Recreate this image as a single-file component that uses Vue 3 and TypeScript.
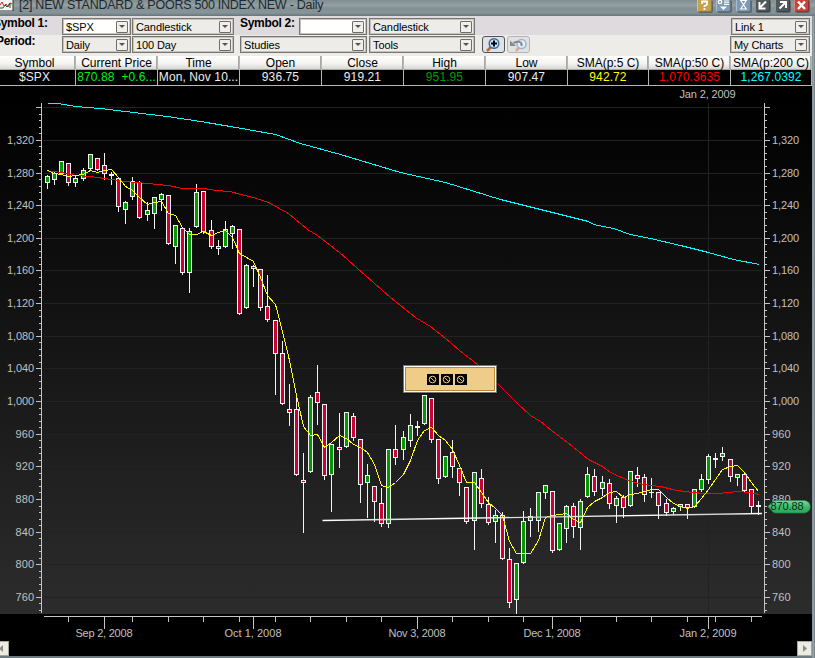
<script setup lang="ts">
type Kind = 'g' | 'r' | 'd'
type Candle = [x: number, high: number, top: number, bottom: number, low: number, kind: Kind]

const candles: Candle[] = [
  [47, 175, 176, 183, 189, 'g'], [54, 172, 173, 180, 185, 'g'], [61, 161, 161, 174, 175, 'g'], [68, 163, 163, 183, 186, 'r'],
  [75, 176, 178, 183, 187, 'g'], [83, 168, 170, 179, 181, 'g'], [90, 154, 154, 169, 170, 'g'], [97, 158, 158, 170, 171, 'r'],
  [104, 153, 165, 174, 180, 'r'], [111, 172, 174, 176, 185, 'd'], [118, 177, 178, 207, 212, 'r'], [125, 201, 202, 210, 224, 'g'],
  [132, 177, 181, 197, 200, 'g'], [139, 181, 182, 218, 219, 'r'], [147, 202, 210, 215, 221, 'g'], [154, 197, 197, 214, 229, 'g'],
  [161, 193, 194, 200, 211, 'g'], [168, 195, 195, 244, 245, 'r'], [175, 225, 225, 247, 264, 'g'], [182, 227, 228, 273, 275, 'r'],
  [189, 228, 231, 273, 293, 'g'], [196, 184, 192, 227, 228, 'g'], [203, 191, 191, 232, 234, 'r'], [211, 220, 230, 247, 249, 'r'],
  [218, 240, 246, 249, 255, 'r'], [225, 221, 229, 247, 248, 'g'], [232, 225, 226, 234, 249, 'g'], [239, 229, 229, 314, 315, 'r'],
  [246, 264, 265, 308, 309, 'g'], [253, 265, 266, 269, 287, 'r'], [260, 269, 269, 308, 311, 'r'], [267, 275, 306, 320, 322, 'r'],
  [275, 320, 320, 354, 395, 'r'], [282, 341, 353, 404, 405, 'r'], [289, 384, 409, 413, 426, 'r'], [296, 397, 409, 475, 476, 'r'],
  [303, 453, 480, 483, 533, 'r'], [310, 395, 397, 472, 473, 'g'], [317, 365, 392, 403, 425, 'r'], [324, 404, 404, 476, 480, 'r'],
  [331, 444, 444, 475, 512, 'g'], [339, 413, 447, 450, 468, 'r'], [346, 412, 412, 447, 448, 'g'], [353, 413, 416, 438, 441, 'r'],
  [360, 439, 439, 485, 503, 'r'], [367, 464, 475, 483, 518, 'g'], [374, 486, 486, 502, 522, 'r'], [381, 488, 503, 524, 527, 'r'],
  [388, 449, 449, 524, 528, 'g'], [395, 425, 449, 458, 465, 'r'], [403, 431, 437, 450, 460, 'g'], [410, 414, 425, 441, 447, 'g'],
  [417, 421, 426, 428, 436, 'd'], [424, 395, 395, 424, 425, 'g'], [431, 398, 398, 440, 443, 'r'], [438, 439, 439, 479, 484, 'r'],
  [445, 456, 456, 477, 478, 'g'], [452, 440, 452, 467, 478, 'r'], [459, 468, 468, 483, 496, 'r'], [466, 487, 487, 522, 524, 'r'],
  [474, 472, 472, 521, 550, 'g'], [481, 469, 478, 504, 508, 'r'], [488, 497, 504, 523, 525, 'r'], [495, 510, 515, 522, 543, 'g'],
  [502, 512, 515, 559, 560, 'r'], [509, 548, 559, 603, 608, 'r'], [516, 563, 563, 600, 614, 'g'], [523, 511, 521, 563, 564, 'g'],
  [530, 508, 516, 521, 537, 'g'], [538, 492, 492, 521, 532, 'g'], [545, 485, 485, 493, 499, 'g'], [552, 491, 491, 551, 553, 'r'],
  [559, 523, 523, 550, 551, 'g'], [566, 505, 506, 529, 543, 'g'], [573, 503, 506, 527, 538, 'r'], [580, 499, 501, 528, 550, 'g'],
  [587, 467, 474, 497, 498, 'g'], [594, 469, 476, 492, 496, 'r'], [602, 476, 482, 489, 496, 'g'], [609, 479, 483, 504, 509, 'r'],
  [616, 496, 498, 506, 523, 'g'], [623, 495, 497, 508, 518, 'r'], [630, 471, 471, 506, 507, 'g'], [637, 467, 475, 479, 487, 'r'],
  [644, 474, 477, 495, 502, 'r'], [651, 478, 492, 493, 498, 'd'], [658, 492, 492, 506, 519, 'r'], [666, 499, 503, 513, 516, 'r'],
  [673, 507, 508, 512, 515, 'g'], [680, 504, 504, 507, 511, 'g'], [687, 504, 504, 508, 519, 'r'], [694, 489, 489, 507, 508, 'g'],
  [701, 474, 479, 490, 492, 'g'], [708, 454, 456, 480, 484, 'g'], [715, 453, 458, 460, 468, 'd'], [722, 447, 453, 457, 461, 'g'],
  [730, 459, 459, 477, 482, 'r'], [737, 474, 474, 478, 486, 'g'], [744, 472, 474, 491, 492, 'r'], [751, 489, 489, 507, 514, 'r'],
  [758, 501, 505, 507, 515, 'd'],
]

const fastY = [
  170, 173, 174, 176, 175, 174, 170, 172, 170, 169, 177, 186, 190, 197, 204, 202, 201, 213, 215, 227, 234, 234, 231, 235, 232,
  230, 237, 253, 257, 261, 277, 295, 304, 331, 360, 395, 426, 435, 434, 447, 442, 435, 438, 444, 447, 452, 464, 485, 487, 482,
  474, 460, 440, 430, 427, 435, 440, 449, 465, 482, 482, 492, 502, 508, 515, 541, 553, 553, 553, 540, 517, 515, 514, 513, 519,
  522, 507, 501, 497, 492, 491, 497, 494, 493, 491, 489, 489, 497, 503, 506, 508, 506, 498, 489, 479, 469, 466, 465, 472, 482, 491,
]
const fast = candles.map((c, i) => `${c[0]},${fastY[i]}`).join(' ')
const mid =
  '47,171 54,171 61,172 75,175 90,176 104,178 125,181 147,183 168,185 182,188 203,188 215,190 230,191 240,194 253,197 268,202 288,213 307,229 317,235 339,252 365,275 390,297 415,317 430,326 450,342 459,350 477,364 497,383 517,403 530,415 540,421 551,430 567,442 588,459 602,466 610,472 630,481 643,484 660,486 672,489 683,491 703,493 718,493 738,491 748,492 759,494'
const slow =
  '47,103 57,103 75,106 100,108 125,111 150,114 167,116 200,121 230,126 275,134 300,143 340,154 380,166 400,172 445,182 500,199 520,204 560,214 588,221 593,224 613,228 630,234 650,238 680,245 708,252 733,259 759,264'

const BASE = 107.7
const STEP = 32.65
const majors = Array.from({ length: 16 }, (_, i) => ({
  y: Math.floor(BASE + i * STEP),
  label: i === 0 ? '' : (1360 - i * 40).toLocaleString('en-US'),
}))
const minors = Array.from({ length: 78 }, (_, i) => i)
  .filter((i) => i % 5 !== 0)
  .map((i) => Math.floor(BASE + (i * STEP) / 5))
  .filter((y) => y < 613)

const months = [
  { x: 104, label: 'Sep 2, 2008' }, { x: 253, label: 'Oct 1, 2008' }, { x: 417, label: 'Nov 3, 2008' },
  { x: 552, label: 'Dec 1, 2008' }, { x: 708, label: 'Jan 2, 2009' },
]
const weeks = [68, 132, 168, 203, 239, 275, 310, 346, 381, 452, 488, 523, 580, 616, 651, 687, 715, 751]

const quotes = [
  { head: 'Symbol', value: '$SPX', tone: 'plain' },
  { head: 'Current Price', value: '870.88  +0.6...', tone: 'lime' },
  { head: 'Time', value: 'Mon, Nov 10...', tone: 'plain' },
  { head: 'Open', value: '936.75', tone: 'plain' },
  { head: 'Close', value: '919.21', tone: 'plain' },
  { head: 'High', value: '951.95', tone: 'green' },
  { head: 'Low', value: '907.47', tone: 'plain' },
  { head: 'SMA(p:5 C)', value: '942.72', tone: 'yellow' },
  { head: 'SMA(p:50 C)', value: '1,070.3635', tone: 'red' },
  { head: 'SMA(p:200 C)', value: '1,267.0392', tone: 'cyan' },
]
</script>

<template>
  <div class="window">
    <header class="titlebar">
      <svg class="app-icon" width="14" height="11" viewBox="0 0 14 11">
        <rect x="-1" y="-1" width="14" height="12" fill="#f4f4f2" stroke="#333" />
        <path d="M0 5l2-3 2 4 2-2 2 3 2-4 2 1" fill="none" stroke="#c22" />
        <path d="M0 8h3l2-3 2 2 3-4v5" fill="none" stroke="#175c35" />
      </svg>
      <span class="title">[2] NEW STANDARD &amp; POORS 500 INDEX NEW - Daily</span>
      <div class="win-buttons">
        <svg class="gold" viewBox="0 0 15 12"><path d="M5 4V1.500h5V4.500L7.500 6v1M7.500 8v2" /></svg>
        <svg class="blue" viewBox="0 0 15 12"><circle cx="4" cy="2" r="1.700" /><path d="M8 0h5M8 2.200h5M8 4.400h5" /><path class="solid" d="M4 6.500h7l-3.500 3.500z" /></svg>
        <svg class="blue" viewBox="0 0 15 12"><path d="M4 .500h7M4 9h7M5 1l5 7.500M10 1L5 8.500" /></svg>
        <svg class="dark" viewBox="0 0 15 12"><path d="M11 1.500L5.500 7M4.500 2v6.500h6" /></svg>
        <svg class="dark" viewBox="0 0 15 12"><path d="M4.500 8.500L10 3M5 2h6v6" /></svg>
        <svg class="close" viewBox="0 0 15 12"><path d="M4 1.500l7 7.500M11 1.500L4 9" /></svg>
      </div>
    </header>

    <div class="bar top">
      <span class="label cut">Symbol 1:</span>
      <div class="combo w69 white"><span>$SPX</span><i /></div>
      <div class="combo w102"><span>Candlestick</span><i /></div>
      <span class="label second">Symbol 2:</span>
      <div class="combo w68 white"><span></span><i /></div>
      <div class="combo w106"><span>Candlestick</span><i /></div>
      <div class="combo w79 end"><span>Link 1</span><i /></div>
    </div>
    <div class="bar bottom">
      <span class="label cut">Period:</span>
      <div class="combo w69"><span>Daily</span><i /></div>
      <div class="combo w102"><span>100 Day</span><i /></div>
      <div class="combo w127"><span>Studies</span><i /></div>
      <div class="combo w106"><span>Tools</span><i /></div>
      <div class="tool">
        <svg width="19" height="14" viewBox="0 0 19 14">
          <path d="M7 9l-4 4" stroke="#b5683c" stroke-width="2.500" />
          <circle cx="10" cy="5.500" r="4.800" fill="#c9e4fb" stroke="#3d66a8" stroke-width="1.400" />
          <path d="M7 5.500h6M10 2.500v6" stroke="#000" stroke-width="2" />
        </svg>
      </div>
      <div class="tool faded">
        <svg width="19" height="14" viewBox="0 0 19 14">
          <path d="M10 9.500l-3 3.500" stroke="#d8a58b" stroke-width="2.500" />
          <circle cx="12.500" cy="6" r="4.500" fill="#e3f0fa" stroke="#9ab3d2" stroke-width="1.500" />
          <path d="M12.500 8c1-5-4-5-8-3" fill="none" stroke="#888" stroke-width="2" />
          <path d="M1 2.500v5.500h6z" fill="#888" />
        </svg>
      </div>
      <div class="combo w80 end"><span>My Charts</span><i /></div>
    </div>

    <div class="quotes">
      <div v-for="q in quotes" :key="q.head" class="quote">
        <div class="head">{{ q.head }}</div>
        <div class="value" :class="q.tone">{{ q.value }}</div>
      </div>
    </div>

    <main class="chart">
      <svg class="plot" width="812" height="570" viewBox="0 86 812 570">
        <defs>
          <linearGradient id="bg" x1="0" y1="0" x2="0" y2="1">
            <stop offset="0" stop-color="#000" /><stop offset="1" stop-color="#2c2c2c" />
          </linearGradient>
          <linearGradient id="tag" x1="0" y1="0" x2="0" y2="1">
            <stop offset="0" stop-color="#7fd6a0" /><stop offset="0.500" stop-color="#3dbc6c" /><stop offset="1" stop-color="#27a657" />
          </linearGradient>
          <linearGradient id="trend" gradientUnits="userSpaceOnUse" x1="322" y1="0" x2="762" y2="0">
            <stop offset="0" stop-color="#fff" /><stop offset="0.150" stop-color="#ddd" /><stop offset="0.300" stop-color="#fff" />
            <stop offset="0.500" stop-color="#ccc" /><stop offset="0.720" stop-color="#fff" /><stop offset="0.900" stop-color="#ccc" /><stop offset="1" stop-color="#fff" />
          </linearGradient>
        </defs>
        <rect x="0" y="86" width="812" height="570" fill="#000" />
        <rect x="0" y="98" width="812" height="516" fill="url(#bg)" />

        <g fill="#222">
          <rect v-for="m in majors" :key="m.y" x="44" :y="m.y" width="718" height="1" />
          <rect x="708" y="103" width="1" height="511" />
        </g>

        <g fill="#c4c4c4">
          <rect x="41" y="103" width="1" height="510" />
          <rect x="764" y="103" width="1" height="510" />
          <template v-for="m in majors" :key="m.y">
            <rect x="36" :y="m.y" width="5" height="1" />
            <rect x="765" :y="m.y" width="5" height="1" />
          </template>
          <template v-for="y in minors" :key="y">
            <rect x="39" :y="y" width="2" height="1" />
            <rect x="765" :y="y" width="2" height="1" />
          </template>
          <rect x="44" y="616" width="718" height="1" />
          <rect v-for="m in months" :key="m.x" :x="m.x" y="617" width="1" height="12" />
          <rect v-for="x in weeks" :key="x" :x="x" y="617" width="1" height="5" />
        </g>

        <g class="axis">
          <template v-for="m in majors" :key="m.y">
            <text v-if="m.label" x="34" :y="m.y + 4" text-anchor="end" :textLength="m.label.length > 3 ? 27 : 18.500">{{ m.label }}</text>
            <text v-if="m.label" x="772" :y="m.y + 4" :textLength="m.label.length > 3 ? 27 : 18.500">{{ m.label }}</text>
          </template>
          <text v-for="m in months" :key="m.x" :x="m.x" y="637" text-anchor="middle" textLength="57">{{ m.label }}</text>
          <text x="707.500" y="98" text-anchor="middle" textLength="56">Jan 2, 2009</text>
        </g>

        <g shape-rendering="crispEdges">
          <g v-for="c in candles" :key="c[0]">
            <rect :x="c[0]" :y="c[1]" width="1" :height="c[4] - c[1]" fill="#f3f3f3" />
            <rect :x="c[0] - 2" :y="c[2]" width="5" :height="c[3] - c[2]" fill="#f3f3f3" />
            <rect v-if="c[5] !== 'd'" :x="c[0] - 1" :y="c[2] + 1" width="3" :height="c[3] - c[2] - 2" :fill="c[5] === 'g' ? '#009a00' : '#cc0033'" />
          </g>
          <g fill="none" transform="translate(0.500 0.500)">
            <polyline :points="slow" stroke="#00ffff" />
            <polyline :points="mid" stroke="#ff0000" />
            <polyline :points="fast" stroke="#ffff00" />
          </g>
        </g>
        <line x1="322.500" y1="520.500" x2="762" y2="513.500" stroke="url(#trend)" stroke-width="1.300" />

        <g>
          <rect x="404" y="367" width="94" height="27" fill="#000" opacity="0.350" />
          <rect x="403.500" y="365.500" width="93" height="27" fill="#fff" stroke="#777" />
          <rect x="405.500" y="367.500" width="89" height="23" fill="#efcc88" stroke="#b98731" />
          <g v-for="x in [427, 441, 455]" :key="x">
            <rect :x="x" y="374" width="12" height="11" fill="#000" />
            <circle :cx="x + 5.500" cy="379.500" r="3.300" fill="none" stroke="#efcc88" />
            <path :d="`M${x + 3.300} 377.500l4.500 4`" stroke="#efcc88" />
          </g>
        </g>

        <path d="M768 506.500l5-5q1-1 3-1h28a6.200 6.200 0 0 1 0 12.500h-28q-2 0-3-1z" fill="url(#tag)" stroke="#238a4a" stroke-width="0.600" />
        <text class="tag" x="770.500" y="510" textLength="33">870.88</text>

        <g>
          <rect x="-1" y="641.500" width="9.500" height="14" fill="#ecebe6" stroke="#aaa697" />
          <path d="M3 645v7l-4-3.500z" fill="#8d8a80" />
          <rect x="797.500" y="641.500" width="14" height="14" fill="#ecebe6" stroke="#aaa697" />
          <path d="M803 645v7l4-3.500z" fill="#8d8a80" />
        </g>
      </svg>
    </main>
  </div>
</template>

<style>
body { margin: 0; overflow: hidden; }
</style>

<style scoped>
.window {
  box-sizing: border-box;
  width: 815px;
  height: 658px;
  overflow: hidden;
  display: flex;
  flex-direction: column;
  background: linear-gradient(90deg, #6d7b80 812px, #a2afb3 813px, #6a787d 815px);
  font-family: "Liberation Sans", Arial, sans-serif;
}
.titlebar {
  flex: none;
  height: 16px;
  display: flex;
  align-items: flex-start;
  background: linear-gradient(#7f8e92, #94a0a3 35%, #829094 50%, #87959a 80%, #66757a);
}
.app-icon { width: 14px; margin-right: 5px; }
.title {
  font-size: 12.5px;
  line-height: 16px;
  margin-top: -3px;
  letter-spacing: -0.25px;
  color: #20282b;
  white-space: pre;
}
.win-buttons { margin-left: auto; margin-right: 6px; display: flex; gap: 4.500px; }
.win-buttons svg {
  width: 15px;
  height: 12px;
  fill: none;
  stroke: #fff;
  stroke-width: 1.8;
  border-radius: 0 0 2px 2px;
  box-shadow: inset -1px -1px 0 rgba(0, 0, 0, 0.25), inset 1px 0 0 rgba(255, 255, 255, 0.35), 1px 1px 0 #5b686c;
}
.win-buttons .gold { background: #c8a04a; }
.win-buttons .blue { background: #7f9ab3; stroke-width: 1.2; }
.win-buttons .solid { fill: #fff; stroke: none; }
.win-buttons .dark { background: #50585b; stroke-width: 2; }
.win-buttons .close { background: #c5463a; stroke-width: 2.4; }

.bar {
  flex: none;
  width: 812px;
  box-sizing: border-box;
  padding-right: 2px;
  display: flex;
  align-items: flex-start;
}
.top { height: 19px; padding-top: 2px; background: #dedade; }
.bottom { height: 21px; padding-top: 1px; background: #edece9; }
.label {
  flex: none;
  font-size: 12px;
  font-weight: bold;
  line-height: 14px;
  white-space: nowrap;
  color: #000;
  letter-spacing: -0.3px;
}
.top .label { margin-top: -2px; }
.cut { width: 62px; text-indent: -7px; }
.bottom .cut { margin-top: -2px; text-indent: -4px; }
.second { width: 59px; margin-left: 6px; }
.combo {
  flex: none;
  box-sizing: border-box;
  height: 17px;
  padding: 1px 1px 1px 3px;
  border: 1px solid #77756f;
  box-shadow: inset 0 0 0 1px #c5c3bd;
  background: #edece8;
  display: flex;
  align-items: center;
  justify-content: space-between;
  font-size: 11px;
  line-height: 13px;
  white-space: nowrap;
  letter-spacing: -0.1px;
}
.combo span { padding-top: 1px; }
.combo i {
  box-sizing: border-box;
  width: 12px;
  height: 12px;
  margin-right: 1px;
  border: 1px solid #6f6e6a;
  border-radius: 1px;
  background: #f0efeb;
  display: flex;
  align-items: center;
  justify-content: center;
}
.combo i::after {
  content: "";
  border: 3px solid transparent;
  border-top-color: #55534f;
  border-bottom: 0;
}
.white { background: #fff; }
.w69 { width: 69px; margin-right: 1px; }
.w102 { width: 102px; }
.w68 { width: 68px; margin-right: 2px; }
.w127 { width: 127px; margin: 0 2px 0 6px; }
.w106 { width: 106px; }
.w79 { width: 79px; }
.w80 { width: 80px; }
.end { margin-left: auto; }
.tool {
  box-sizing: border-box;
  width: 23px;
  height: 17px;
  margin-left: 7px;
  border: 1px solid #4d5559;
  border-radius: 3px;
  background: #dfe1e2;
  display: flex;
  align-items: center;
  justify-content: center;
}
.tool.faded { margin-left: 2px; border-color: #b3b4b5; }

.quotes {
  flex: none;
  width: 812px;
  height: 30px;
  box-sizing: border-box;
  border-bottom: 1px solid #b5b5b5;
  background: #000;
  display: grid;
  grid-template-columns: 76px 82px 82px 82px 82px 82px 82px 81px 82px 81px;
}
.quote {
  min-width: 0;
  border-right: 1px solid #b5b5b5;
  font-size: 12px;
  text-align: center;
  white-space: pre;
  display: flex;
  flex-direction: column;
}
.head {
  height: 14px;
  line-height: 14px;
  display: flex;
  justify-content: center;
  color: #000;
  background: linear-gradient(#fff, #f3f3f1 55%, #d2d1cd);
  box-shadow: inset -1px -1px 0 #aaa8a2;
}
.quote:first-child > div { padding-right: 6px; }
.value { height: 15px; line-height: 15px; color: #eee; letter-spacing: 0.1px; }
.lime { color: #00f01e; }
.green { color: #009a00; }
.yellow { color: #ff0; }
.red { color: #f00; }
.cyan { color: #0ff; }

.chart { flex: none; width: 812px; height: 570px; }
.plot { display: block; }
.axis { font-size: 11px; fill: #c0c0c0; }
.tag { font-size: 11px; fill: #062a12; }
</style>
